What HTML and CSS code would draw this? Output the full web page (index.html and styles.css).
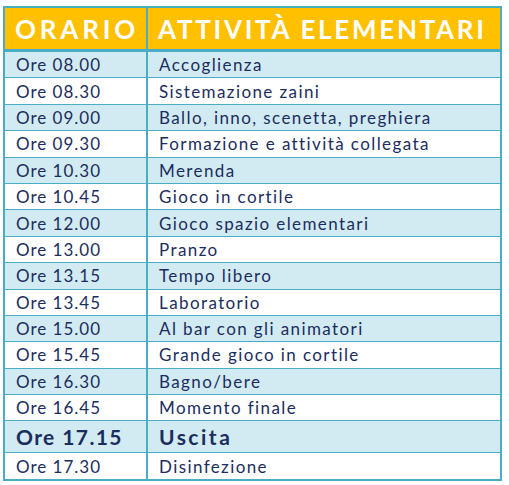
FILE: index.html
```html
<!DOCTYPE html>
<html>
<head>
<meta charset="utf-8">
<link rel="stylesheet" href="styles.css">
</head>
<body>
<table class="schedule">
  <thead>
    <tr class="head">
      <th class="c1">ORARIO</th>
      <th class="c2">ATTIVITÀ ELEMENTARI</th>
    </tr>
  </thead>
  <tbody>
    <tr class="alt"><td class="c1">Ore 08.00</td><td class="c2">Accoglienza</td></tr>
    <tr><td class="c1">Ore 08.30</td><td class="c2">Sistemazione zaini</td></tr>
    <tr class="alt"><td class="c1">Ore 09.00</td><td class="c2">Ballo, inno, scenetta, preghiera</td></tr>
    <tr><td class="c1">Ore 09.30</td><td class="c2">Formazione e attività collegata</td></tr>
    <tr class="alt"><td class="c1">Ore 10.30</td><td class="c2">Merenda</td></tr>
    <tr><td class="c1">Ore 10.45</td><td class="c2">Gioco in cortile</td></tr>
    <tr class="alt"><td class="c1">Ore 12.00</td><td class="c2">Gioco spazio elementari</td></tr>
    <tr><td class="c1">Ore 13.00</td><td class="c2">Pranzo</td></tr>
    <tr class="alt"><td class="c1">Ore 13.15</td><td class="c2">Tempo libero</td></tr>
    <tr><td class="c1">Ore 13.45</td><td class="c2">Laboratorio</td></tr>
    <tr class="alt"><td class="c1">Ore 15.00</td><td class="c2">Al bar con gli animatori</td></tr>
    <tr><td class="c1">Ore 15.45</td><td class="c2">Grande gioco in cortile</td></tr>
    <tr class="alt"><td class="c1">Ore 16.30</td><td class="c2">Bagno/bere</td></tr>
    <tr><td class="c1">Ore 16.45</td><td class="c2">Momento finale</td></tr>
    <tr class="alt big"><td class="c1">Ore 17.15</td><td class="c2">Uscita</td></tr>
    <tr><td class="c1">Ore 17.30</td><td class="c2">Disinfezione</td></tr>
  </tbody>
</table>
</body>
</html>
```
FILE: styles.css
```css
html, body {
  margin: 0;
  padding: 0;
  background: #ffffff;
}
body {
  padding: 6px 0 0 3px;
  font-family: Lato, "Liberation Sans", sans-serif;
  color: #1b2d5e;
}
.schedule {
  border-collapse: collapse;
  width: 499px;
  border: 2px solid #4bacc6;
  table-layout: fixed;
}
.schedule .c1 {
  width: 131px;
}
.schedule th, .schedule td {
  text-align: left;
  padding: 0 0 0 11px;
  border-left: 2px solid #4bacc6;
  border-bottom: 1px solid #4bacc6;
  white-space: nowrap;
  overflow: hidden;
}
.schedule th {
  height: 41px;
  background: #ffc000;
  color: #ffffff;
  font-weight: 700;
  font-size: 26px;
  line-height: 30px;
  border-bottom: 3px solid #4bacc6;
  padding-left: 10px;
}
.schedule th.c1 {
  letter-spacing: 3.8px;
}
.schedule th.c2 {
  letter-spacing: 2.7px;
}
.schedule td {
  height: 24.4px;
  font-size: 17px;
  line-height: 20px;
  padding-top: 1px;
}
.schedule td.c1 {
  letter-spacing: 1px;
}
.schedule td.c2 {
  letter-spacing: 1.4px;
}
.schedule tr.alt td {
  background: #d2eaf1;
}
.schedule tr.big td {
  height: 30px;
  font-size: 21px;
  font-weight: 700;
  letter-spacing: 1.4px;
}
.schedule tr.big td.c2 {
  letter-spacing: 2.5px;
}
```
